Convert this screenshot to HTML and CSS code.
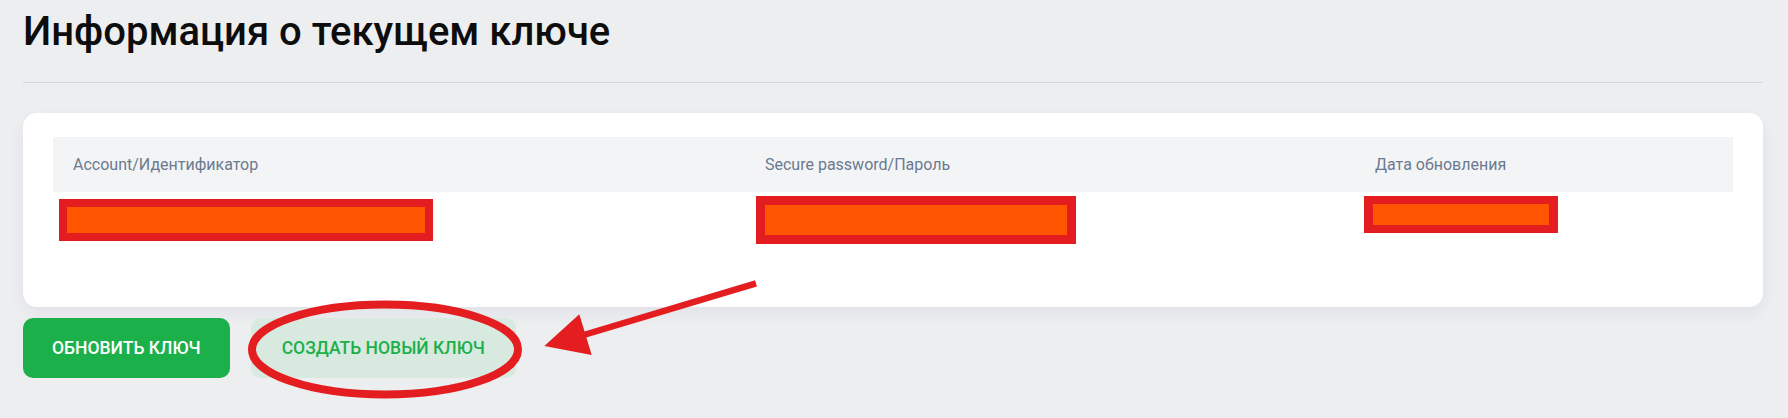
FILE: index.html
```html
<!DOCTYPE html>
<html lang="ru">
<head>
<meta charset="utf-8">
<title>Информация о текущем ключе</title>
<link rel="stylesheet" href="styles.css">
</head>
<body>
<div class="page">
  <h1 class="title">Информация о текущем ключе</h1>
  <hr class="divider">
  <section class="card">
    <div class="table">
      <div class="thead">
        <div class="th">Account/Идентификатор</div>
        <div class="th">Secure password/Пароль</div>
        <div class="th">Дата обновления</div>
      </div>
      <div class="tbody">
        <div class="td"><span class="redact r1"></span></div>
        <div class="td"><span class="redact r2"></span></div>
        <div class="td"><span class="redact r3"></span></div>
      </div>
    </div>
  </section>
  <div class="actions">
    <button class="btn btn-primary">ОБНОВИТЬ КЛЮЧ</button>
    <button class="btn btn-soft">СОЗДАТЬ НОВЫЙ КЛЮЧ</button>
  </div>
</div>
<svg class="annotations" width="1788" height="418" viewBox="0 0 1788 418">
  <ellipse cx="385" cy="349.5" rx="133" ry="45" fill="none" stroke="#e41e20" stroke-width="8"/>
  <line x1="756" y1="283.4" x2="582" y2="335.5" stroke="#e41e20" stroke-width="6.5"/>
  <polygon points="544.3,346 579.3,314.3 591.7,355" fill="#e41e20"/>
</svg>
</body>
</html>
```
FILE: styles.css
```css
* { box-sizing: border-box; }
html, body { margin: 0; padding: 0; }
body {
  background: #edeef0;
  font-family: Roboto, "Noto Sans", "Liberation Sans", sans-serif;
  width: 1788px;
  height: 418px;
  overflow: hidden;
  position: relative;
}
.page {
  padding: 8px 25px 0 23px;
}
.title {
  margin: 0;
  font-size: 40px;
  line-height: 47px;
  font-weight: 500;
  color: #0d0d0d;
}
.divider {
  margin: 27px 0 0;
  border: 0;
  border-top: 1px solid #d5d7de;
  height: 0;
}
.card {
  margin-top: 30px;
  background: #fff;
  border-radius: 14px;
  padding: 24px 30px 24px 30px;
  box-shadow: 0 6px 16px rgba(30, 40, 80, 0.06);
}
.thead, .tbody {
  display: grid;
  grid-template-columns: 692px 610px 1fr;
}
.thead {
  background: #f3f4f6;
  height: 55px;
  align-items: center;
}
.th {
  padding-left: 20px;
  font-size: 16px;
  color: #6b7a8f;
}
.tbody {
  height: 91px;
  align-items: start;
}
.redact {
  display: block;
  background: #ff5400;
  border: 8px solid #e41e20;
}
.r1 { width: 374px; height: 42px; margin: 7px 0 0 6px; }
.r2 { width: 320px; height: 48px; margin: 4px 0 0 11px; border-width: 9px; }
.r3 { width: 194px; height: 37px; margin: 4px 0 0 9px; border-width: 8.5px 9px; }
.actions {
  margin-top: 11px;
  display: flex;
  gap: 21px;
}
.btn {
  height: 60px;
  border: 0;
  border-radius: 10px;
  padding: 0 29px;
  font-family: Roboto, "Noto Sans", "Liberation Sans", sans-serif;
  font-size: 17.5px;
  font-weight: 500;
  cursor: pointer;
}
.btn-primary {
  background: #1cb04b;
  color: #fff;
}
.btn-soft {
  background: #d8e9df;
  color: #1cb04b;
  padding: 0 31px;
}
.annotations {
  position: absolute;
  left: 0;
  top: 0;
  pointer-events: none;
}
```
